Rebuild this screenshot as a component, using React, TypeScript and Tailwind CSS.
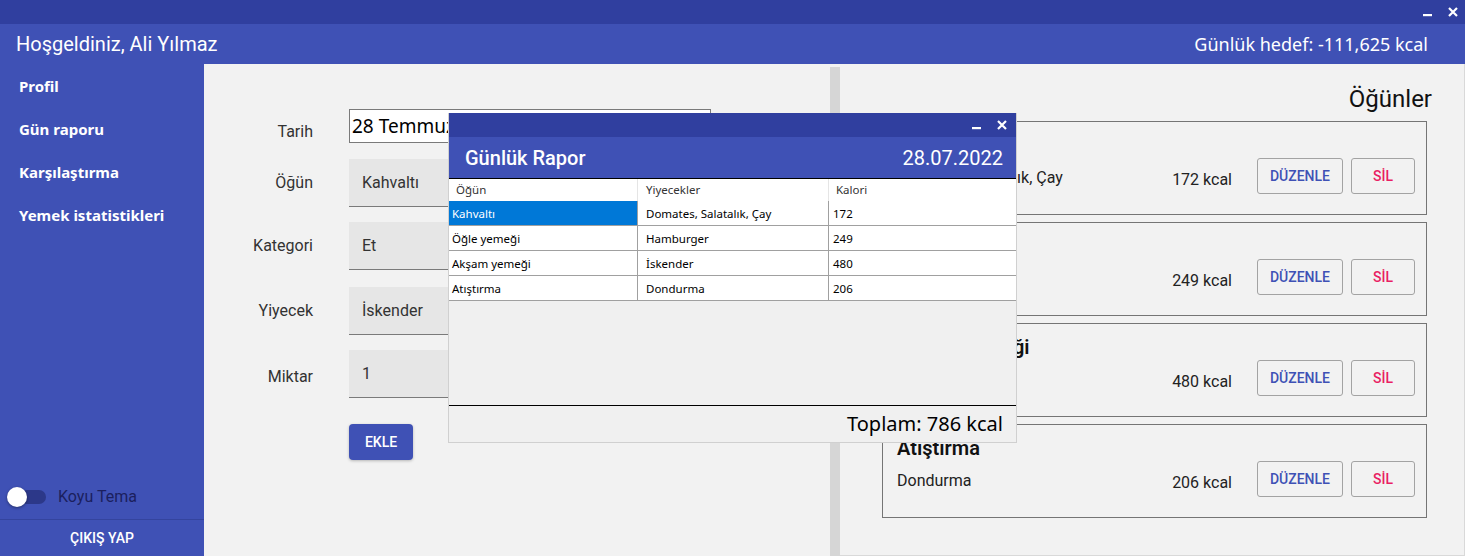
import React from 'react'

const meals = [
  { title: 'Kahvaltı', foods: 'Domates, Salatalık, Çay', kcal: 172 },
  { title: 'Öğle yemeği', foods: 'Hamburger', kcal: 249 },
  { title: 'Akşam yemeği', foods: 'İskender', kcal: 480 },
  { title: 'Atıştırma', foods: 'Dondurma', kcal: 206 },
]

const menu = ['Profil', 'Gün raporu', 'Karşılaştırma', 'Yemek istatistikleri']

const roboto = { fontFamily: 'Roboto, "Noto Sans", sans-serif' }
const segoe = { fontFamily: '"Noto Sans", "Open Sans", sans-serif' }

function WindowButtons({ className = '' }: { className?: string }) {
  return (
    <div className={`flex items-center gap-[15px] ${className}`}>
      <svg width="10" height="10" viewBox="0 0 10 10">
        <rect x="0" y="7" width="9" height="2.2" fill="white" />
      </svg>
      <svg width="10" height="10" viewBox="0 0 10 10">
        <path d="M1 1 L9 9 M9 1 L1 9" stroke="white" strokeWidth="2.2" />
      </svg>
    </div>
  )
}

function FormRow({
  label,
  children,
  className = '',
  labelClass = '',
}: {
  label: string
  children: React.ReactNode
  className?: string
  labelClass?: string
}) {
  return (
    <div className={`flex items-center ${className}`}>
      <div className={`w-[109px] text-right text-[16px] text-[#333] ${labelClass}`} style={roboto}>
        {label}
      </div>
      <div className="ml-[36px]">{children}</div>
    </div>
  )
}

function Combo({ value }: { value: string }) {
  return (
    <div
      className="w-[362px] h-[48px] bg-[#e6e6e6] border-b border-[#7a7a7a] flex items-center pl-[13px] text-[16px] text-[#333]"
      style={roboto}
    >
      {value}
    </div>
  )
}

function DailyReport() {
  return (
    <div className="absolute left-[448px] top-[113px] w-[569px] h-[330px] flex flex-col bg-[#f0f0f0] border-x border-b border-[#d0d0d0]">
      <div className="h-[24px] bg-[#303f9f] flex items-center justify-end pr-[9px]">
        <WindowButtons />
      </div>
      <div className="h-[42px] bg-[#3f51b5] border-b border-black flex items-center justify-between pl-[16px] pr-[13px] text-white">
        <span className="text-[20px] font-medium" style={roboto}>
          Günlük Rapor
        </span>
        <span className="text-[20px]" style={roboto}>
          28.07.2022
        </span>
      </div>
      <div className="grid grid-cols-[188px_191px_1fr] text-[11.5px] text-black" style={segoe}>
        <div className="h-[22px] bg-white flex items-center pl-[7px] text-[#333]">Öğün</div>
        <div className="h-[22px] bg-white flex items-center pl-[8px] border-l border-[#e5e5e5] text-[#333]">Yiyecekler</div>
        <div className="h-[22px] bg-white flex items-center pl-[7px] border-l border-[#e5e5e5] text-[#333]">Kalori</div>
        {meals.map((m, i) => (
          <React.Fragment key={m.title}>
            <div
              className={`h-[25px] flex items-center pt-[1px] pl-[3px] border-b border-[#a0a0a0] ${
                i === 0 ? 'bg-[#0078d7] text-white' : 'bg-white'
              }`}
            >
              {m.title}
            </div>
            <div className="h-[25px] bg-white flex items-center pt-[1px] pl-[8px] border-l border-b border-[#a0a0a0]">{m.foods}</div>
            <div className="h-[25px] bg-white flex items-center pt-[1px] pl-[4px] border-l border-b border-[#a0a0a0]">{m.kcal}</div>
          </React.Fragment>
        ))}
      </div>
      <div className="flex-1" />
      <div className="h-[37px] border-t border-black flex items-center justify-end pr-[13px] text-[20px] text-black" style={segoe}>
        Toplam: 786 kcal
      </div>
    </div>
  )
}

export default function App() {
  return (
    <div className="relative w-[1465px] h-[556px] flex flex-col overflow-hidden bg-[#f2f2f2]">
      {/* Title bar */}
      <div className="h-[24px] bg-[#303f9f] flex items-center justify-end pr-[7px]">
        <WindowButtons />
      </div>

      {/* Header */}
      <div className="h-[40px] bg-[#3f51b5] flex items-center justify-between pl-[16px] pr-[37px] text-white">
        <span className="text-[20px]" style={roboto}>
          Hoşgeldiniz, Ali Yılmaz
        </span>
        <span className="text-[18px]" style={segoe}>
          Günlük hedef: -111,625 kcal
        </span>
      </div>

      <div className="flex flex-1 min-h-0">
        {/* Sidebar */}
        <aside className="w-[204px] bg-[#3f51b5] flex flex-col text-white">
          <nav className="flex flex-col pt-[1px]">
            {menu.map((item) => (
              <div key={item} className="h-[43px] flex items-center pl-[19px] text-[15px] font-bold" style={segoe}>
                {item}
              </div>
            ))}
          </nav>
          <div className="flex-1" />
          <div className="h-[44px] flex items-center pl-[7px] pb-[1px]">
            <div className="relative w-[40px] h-[20px] flex items-center">
              <div className="absolute left-[13px] w-[26px] h-[14px] rounded-full bg-[#2c3889]" />
              <div className="absolute left-0 w-[20px] h-[20px] rounded-full bg-white shadow-[0_1px_3px_rgba(0,0,0,0.4)]" />
            </div>
            <span className="ml-[11px] text-[16px] text-[#1b1f5e]" style={roboto}>
              Koyu Tema
            </span>
          </div>
          <div className="h-[37px] border-t border-[#34449e] flex items-center justify-center text-[14px] font-medium" style={roboto}>
            ÇIKIŞ YAP
          </div>
        </aside>

        {/* Form pane */}
        <section className="w-[626px] pt-[45px] flex flex-col">
          <FormRow label="Tarih" className="h-[34px]" labelClass="mt-[11px]">
            <div className="w-[362px] h-[34px] bg-white border border-[#7a7a7a] flex items-center pl-[2px] text-[19px] text-black" style={segoe}>
              28 Temmuz
            </div>
          </FormRow>
          <FormRow label="Öğün" className="mt-[16px]">
            <Combo value="Kahvaltı" />
          </FormRow>
          <FormRow label="Kategori" className="mt-[15px]">
            <Combo value="Et" />
          </FormRow>
          <FormRow label="Yiyecek" className="mt-[17px]">
            <Combo value="İskender" />
          </FormRow>
          <FormRow label="Miktar" className="mt-[15px]" labelClass="mt-[6px]">
            <Combo value="1" />
          </FormRow>
          <div className="mt-[26px] ml-[145px]">
            <button
              className="w-[64px] h-[36px] rounded-[4px] bg-[#3f51b5] text-white text-[14px] font-medium shadow-[0_1px_3px_rgba(0,0,0,0.25)]"
              style={roboto}
            >
              EKLE
            </button>
          </div>
        </section>

        {/* Splitter */}
        <div className="w-[10px] mt-[3px] bg-[#d6d6d6]" />

        {/* Meals pane */}
        <section className="flex-1 flex flex-col pl-[42px] pr-[37px] border-r border-b border-[#d9d9d9]">
          <h2 className="h-[57px] flex items-end justify-end pb-[4px] -mr-[5px] text-[24px] text-[#111]" style={roboto}>
            Öğünler
          </h2>
          <div className="flex flex-col gap-[7px]">
            {meals.map((m) => (
              <div key={m.title} className="h-[94px] border border-[#757575] flex pl-[14px] pr-[11px]" style={roboto}>
                <div className="flex-1 pt-[10px]">
                  <div className="text-[20px] font-semibold text-[#111] leading-[26px]">{m.title}</div>
                  <div className="mt-[8px] text-[16px] text-[#222]">{m.foods}</div>
                </div>
                <div className="pt-[36px] flex items-start">
                  <span className="h-[36px] flex items-center mt-[4px] text-[16px] text-[#222] mr-[25px]">{m.kcal} kcal</span>
                  <button className="w-[86px] h-[36px] rounded-[3px] border border-[#a3a3a3] text-[14px] font-medium text-[#3f51b5]">
                    DÜZENLE
                  </button>
                  <button className="ml-[8px] w-[64px] h-[36px] rounded-[3px] border border-[#a3a3a3] text-[14px] font-medium text-[#e91e63]">
                    SİL
                  </button>
                </div>
              </div>
            ))}
          </div>
        </section>
      </div>

      <DailyReport />
    </div>
  )
}
